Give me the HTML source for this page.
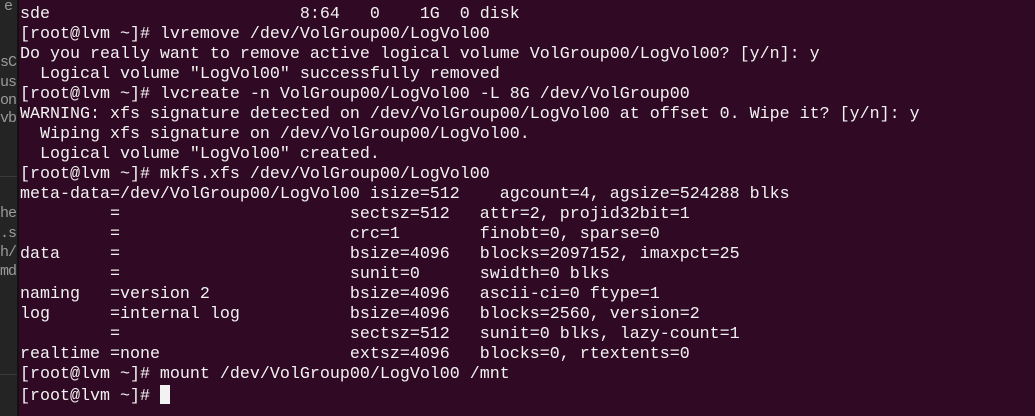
<!DOCTYPE html>
<html><head><meta charset="utf-8"><style>
html,body{margin:0;padding:0;width:1035px;height:416px;overflow:hidden;background:#300a24;}
#side{position:absolute;left:0;top:0;width:17px;height:416px;background:#242424;border-right:2px solid #111;overflow:hidden;}
#side span{position:absolute;left:0;font:15px "Liberation Mono",monospace;color:#9a9a9a;line-height:18px;letter-spacing:-1px;}
#side .h{position:absolute;left:0;width:17px;height:1px;background:#3a3a3a;}
pre{position:absolute;left:20px;top:5px;margin:0;font:16.67px/20px "Liberation Mono",monospace;color:#f2f2f2;white-space:pre;}
.cur{display:inline-block;width:10px;height:19px;background:#f2f2f2;vertical-align:-4px;}
</style></head><body>
<div id="side">
<span style="top:-2px;left:4px">e</span>
<span style="top:54px">sC</span>
<span style="top:74px">us</span>
<span style="top:92px">on</span>
<span style="top:110px">vb</span>
<span style="top:205px">he</span>
<span style="top:225px">.s</span>
<span style="top:244px">h/</span>
<span style="top:263px">md</span>
<div class="h" style="top:176px"></div>
<div class="h" style="top:374px"></div>
</div>
<pre>sde                         8:64   0    1G  0 disk
[root@lvm ~]# lvremove /dev/VolGroup00/LogVol00
Do you really want to remove active logical volume VolGroup00/LogVol00? [y/n]: y
  Logical volume "LogVol00" successfully removed
[root@lvm ~]# lvcreate -n VolGroup00/LogVol00 -L 8G /dev/VolGroup00
WARNING: xfs signature detected on /dev/VolGroup00/LogVol00 at offset 0. Wipe it? [y/n]: y
  Wiping xfs signature on /dev/VolGroup00/LogVol00.
  Logical volume "LogVol00" created.
[root@lvm ~]# mkfs.xfs /dev/VolGroup00/LogVol00
meta-data=/dev/VolGroup00/LogVol00 isize=512    agcount=4, agsize=524288 blks
         =                       sectsz=512   attr=2, projid32bit=1
         =                       crc=1        finobt=0, sparse=0
data     =                       bsize=4096   blocks=2097152, imaxpct=25
         =                       sunit=0      swidth=0 blks
naming   =version 2              bsize=4096   ascii-ci=0 ftype=1
log      =internal log           bsize=4096   blocks=2560, version=2
         =                       sectsz=512   sunit=0 blks, lazy-count=1
realtime =none                   extsz=4096   blocks=0, rtextents=0
[root@lvm ~]# mount /dev/VolGroup00/LogVol00 /mnt
[root@lvm ~]# <span class="cur"></span></pre>
</body></html>
